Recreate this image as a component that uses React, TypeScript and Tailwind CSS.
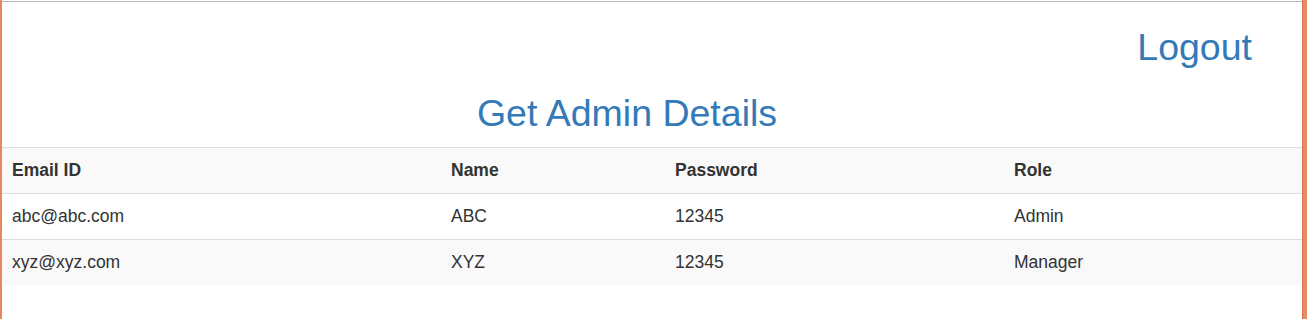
import React from "react";

const rows = [
  { email: "abc@abc.com", name: "ABC", password: "12345", role: "Admin" },
  { email: "xyz@xyz.com", name: "XYZ", password: "12345", role: "Manager" },
];

const cols = "grid grid-cols-[439px_224px_339px_298px]";

export default function App() {
  return (
    <div
      className="flex h-[319px] w-[1307px] bg-white text-[#333333]"
      style={{ fontFamily: '"Liberation Sans", Arial, sans-serif' }}
    >
      <div className="w-[2px] shrink-0 bg-[#e6875f]" />
      <div className="flex w-[1300px] shrink-0 flex-col pt-px">
        <div className="flex flex-col border-t border-[#b5b5b5] pr-[50px]">
          <div className="mt-[25px] flex justify-end">
            <a className="text-[37.5px] leading-[41px] text-[#337ab7]">Logout</a>
          </div>
          <h2 className="mt-[25px] text-center text-[37.5px] leading-[41px] text-[#337ab7]">
            Get Admin Details
          </h2>
        </div>
        <div className="mt-[13px] text-[17.5px]">
          <div className={`${cols} border-t border-[#dddddd] bg-[#f9f9f9] font-bold`}>
            <div className="px-[10px] py-[10px] leading-[25px]">Email ID</div>
            <div className="px-[10px] py-[10px] leading-[25px]">Name</div>
            <div className="px-[10px] py-[10px] leading-[25px]">Password</div>
            <div className="px-[10px] py-[10px] leading-[25px]">Role</div>
          </div>
          {rows.map((r, i) => (
            <div
              key={r.email}
              className={`${cols} border-t border-[#dddddd] ${i % 2 === 1 ? "bg-[#f9f9f9]" : "bg-white"}`}
            >
              <div className="px-[10px] py-[10px] leading-[25px]">{r.email}</div>
              <div className="px-[10px] py-[10px] leading-[25px]">{r.name}</div>
              <div className="px-[10px] py-[10px] leading-[25px]">{r.password}</div>
              <div className="px-[10px] py-[10px] leading-[25px]">{r.role}</div>
            </div>
          ))}
        </div>
      </div>
      <div className="w-[5px] shrink-0 border-l border-[#cf6f4c] bg-[#e98b66]" />
    </div>
  );
}
